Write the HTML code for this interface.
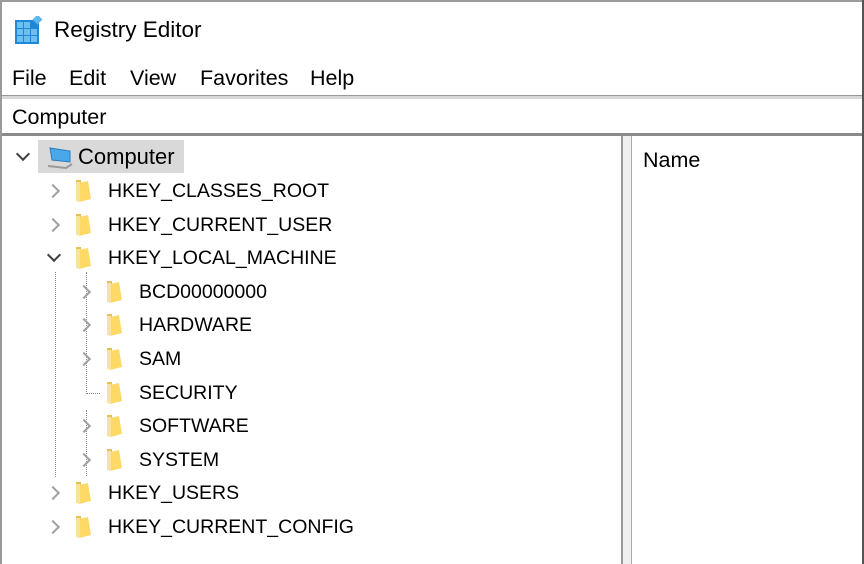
<!DOCTYPE html>
<html><head><style>
body{margin:0;width:864px;height:564px;overflow:hidden;background:#fff;font-family:"Segoe UI","Liberation Sans",sans-serif;color:#000;position:relative}
.a{position:absolute;white-space:nowrap}
.t{font-size:19.5px;line-height:24px}
.m{font-size:21.5px;line-height:24px}
.chev{position:absolute;width:8px;height:8px;border-right:2px solid #a0a0a0;border-bottom:2px solid #a0a0a0;transform:rotate(-45deg)}
.down{border-color:#404040;transform:rotate(45deg)}
.fold{position:absolute;width:17px;height:24px}
</style></head><body>
<div class="a" style="left:0;top:0;width:864px;height:2px;background:#9a9a9a"></div>
<div class="a" style="left:0;top:0;width:2px;height:564px;background:#9a9a9a"></div>
<div class="a" style="left:862px;top:0;width:2px;height:564px;background:#555"></div>
<svg class="a" style="left:15px;top:16px" width="28" height="28" viewBox="0 0 28 28">
<rect x="0" y="4" width="24" height="24" fill="#1e88d8"/>
<g fill="#6cc0f0"><rect x="2" y="6" width="6" height="6"/><rect x="9" y="6" width="6" height="6"/><rect x="2" y="13" width="6" height="6"/><rect x="9" y="13" width="6" height="6"/><rect x="16" y="13" width="6" height="6"/><rect x="2" y="20" width="6" height="6"/><rect x="9" y="20" width="6" height="6"/><rect x="16" y="20" width="6" height="6"/></g>
<rect x="19" y="0" width="7" height="7" fill="#5bb8ef" transform="rotate(45 22.5 3.5)"/>
</svg>
<div class="a m" style="left:54px;top:18px;font-size:22.5px">Registry Editor</div>
<div class="a m" style="left:12px;top:66px">File</div>
<div class="a m" style="left:69px;top:66px">Edit</div>
<div class="a m" style="left:130px;top:66px">View</div>
<div class="a m" style="left:200px;top:66px">Favorites</div>
<div class="a m" style="left:310px;top:66px">Help</div>
<div class="a" style="left:2px;top:95px;width:860px;height:3px;background:#d8d8d8;border-top:1px solid #999"></div>
<div class="a m" style="left:12px;top:105px">Computer</div>
<div class="a" style="left:2px;top:133px;width:860px;height:3px;background:#8a8a8a"></div>
<div class="a" style="left:621px;top:136px;width:2px;height:428px;background:#999"></div>
<div class="a" style="left:623px;top:136px;width:8px;height:428px;background:#f0f0f0"></div>
<div class="a" style="left:631px;top:136px;width:1px;height:428px;background:#aaa"></div>
<div class="a m" style="left:643px;top:148px">Name</div>
<div class="a" style="left:38px;top:140px;width:146px;height:33px;background:#d9d9d9"></div>
<div class="chev down" style="left:18px;top:149px"></div>
<svg class="a" style="left:48px;top:146px" width="26" height="24" viewBox="0 0 26 24"><path d="M2 2 L22 5 L22 16 L4 14 Z" fill="#4aa8e8" stroke="#2a7bc0"/><path d="M0 20 L18 22 L24 18" stroke="#999" fill="none" stroke-width="2"/></svg>
<div class="a m" style="left:78px;top:145px;font-size:22px">Computer</div>
<div class="a" style="left:55px;top:272px;height:205px;border-left:1px dotted #888"></div>
<div class="a" style="left:86px;top:272px;height:122px;border-left:1px dotted #888"></div>
<div class="a" style="left:86px;top:393px;width:14px;border-top:1px dotted #888"></div>
<div class="a" style="left:86px;top:410px;height:66px;border-left:1px dotted #888"></div>
<div id="tree"></div>
<script>
var rows=[[1,'HKEY_CLASSES_ROOT','c'],[1,'HKEY_CURRENT_USER','c'],[1,'HKEY_LOCAL_MACHINE','d'],[2,'BCD00000000','c'],[2,'HARDWARE','c'],[2,'SAM','c'],[2,'SECURITY',''],[2,'SOFTWARE','c'],[2,'SYSTEM','c'],[1,'HKEY_USERS','c'],[1,'HKEY_CURRENT_CONFIG','c']];
var h='';
rows.forEach(function(r,i){var y=191+i*33.6;var o=(r[0]-1)*31;
if(r[2]=='c')h+='<div class="chev" style="left:'+(48+o)+'px;top:'+(y-5)+'px"></div>';
if(r[2]=='d')h+='<div class="chev down" style="left:'+(49+o)+'px;top:'+(y-8)+'px"></div>';
h+='<svg class="fold" style="left:'+(75+o)+'px;top:'+(y-12)+'px" viewBox="0 0 17 24"><path d="M1 1 L6 1 L6 5 L1 7 Z" fill="#e8c050"/><path d="M4 4 L13 2 L16 20 L4 23 Z" fill="#ffd966"/><path d="M1 3 L5 3 L5 23 L1 22 Z" fill="#f7e3a0"/></svg>';
h+='<div class="a t" style="left:'+(108+o)+'px;top:'+(y-12)+'px">'+r[1]+'</div>';});
document.getElementById('tree').innerHTML=h;
</script>
</body></html>
